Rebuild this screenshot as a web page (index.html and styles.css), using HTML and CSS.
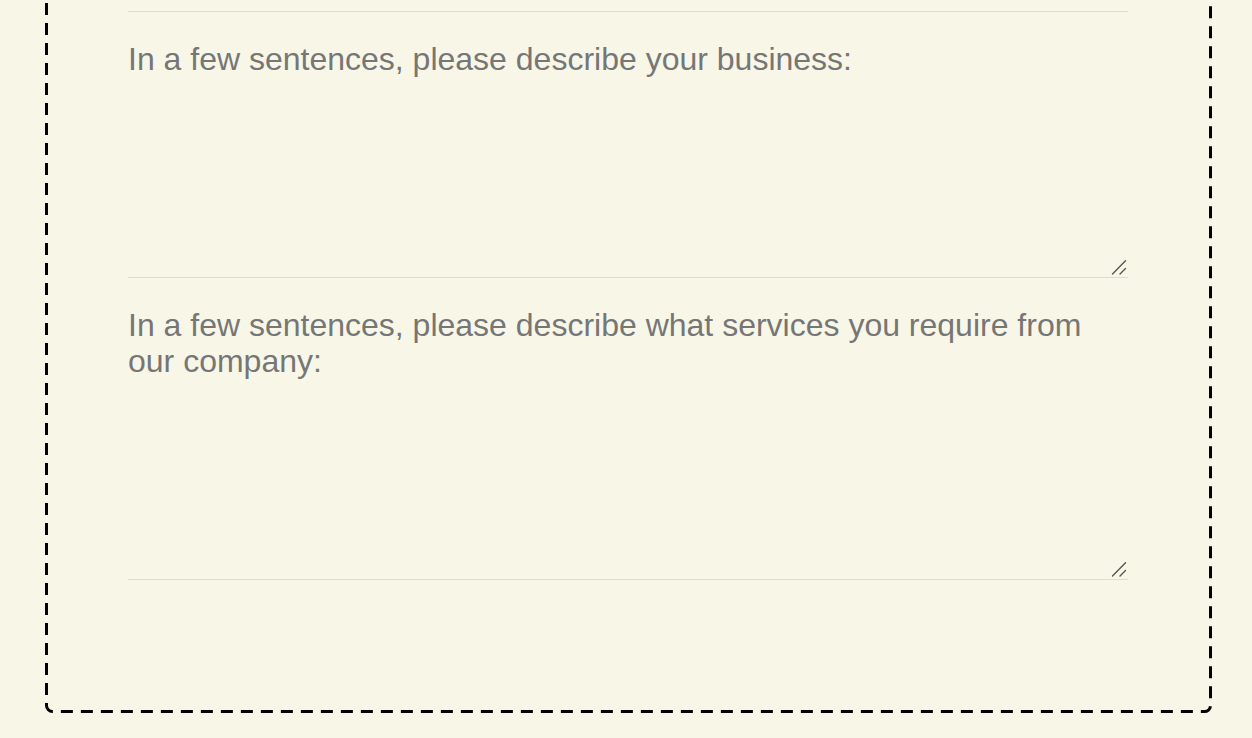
FILE: index.html
```html
<!DOCTYPE html>
<html lang="en">
<head>
<meta charset="utf-8">
<title>Business enquiry</title>
<link rel="stylesheet" href="styles.css">
</head>
<body>
<form class="enquiry">
  <div class="field">
    <input class="field-input" type="text" aria-label="Company name">
  </div>
  <div class="field">
    <label class="field-label" for="business">In a few sentences, please describe your business:</label>
    <div class="text-wrap">
      <textarea class="field-text" id="business"></textarea>
      <svg class="grip" width="16" height="16" viewBox="0 0 16 16" aria-hidden="true"><path d="M1.5 15 L14.5 1.8 M9 15 L14.5 9.4" fill="none" stroke="#555" stroke-width="1.4" stroke-linecap="round"/></svg>
    </div>
  </div>
  <div class="field">
    <label class="field-label" for="services">In a few sentences, please describe what services you require from our company:</label>
    <div class="text-wrap">
      <textarea class="field-text" id="services"></textarea>
      <svg class="grip" width="16" height="16" viewBox="0 0 16 16" aria-hidden="true"><path d="M1.5 15 L14.5 1.8 M9 15 L14.5 9.4" fill="none" stroke="#555" stroke-width="1.4" stroke-linecap="round"/></svg>
    </div>
  </div>
</form>
</body>
</html>
```

FILE: styles.css
```css
html, body {
  margin: 0;
  padding: 0;
  background: #f8f7e7;
}

body {
  font-family: "Liberation Sans", Arial, sans-serif;
  overflow: hidden;
}

.enquiry {
  margin: -120px 40px 25px 45px;
  padding: 43px 84px 133px 83px;
  background-image: url("data:image/svg+xml,%3Csvg xmlns='http://www.w3.org/2000/svg' width='100%25' height='100%25'%3E%3Crect x='1.5' y='1.5' rx='6' ry='6' style='width:calc(100%25 - 3px);height:calc(100%25 - 3px)' fill='none' stroke='%23000' stroke-width='3' stroke-dasharray='12 8'/%3E%3C/svg%3E");
  background-repeat: no-repeat;
  background-size: 100% 100%;
}

.field {
  padding-top: 29px;
}

.field-label {
  display: block;
  font-size: 32px;
  line-height: 36px;
  color: #767676;
}

.text-wrap {
  position: relative;
}

.field-input,
.field-text {
  display: block;
  box-sizing: border-box;
  width: 100%;
  margin: 0;
  padding: 8px 0;
  border: none;
  border-bottom: 1px solid #dcdcdc;
  background: transparent;
  font: inherit;
  font-size: 20px;
  color: #444;
  outline: none;
}

.field-input {
  height: 60px;
}

.field-text {
  height: 201px;
  resize: none;
}

.grip {
  position: absolute;
  right: 1px;
  bottom: 3px;
  display: block;
}
```
